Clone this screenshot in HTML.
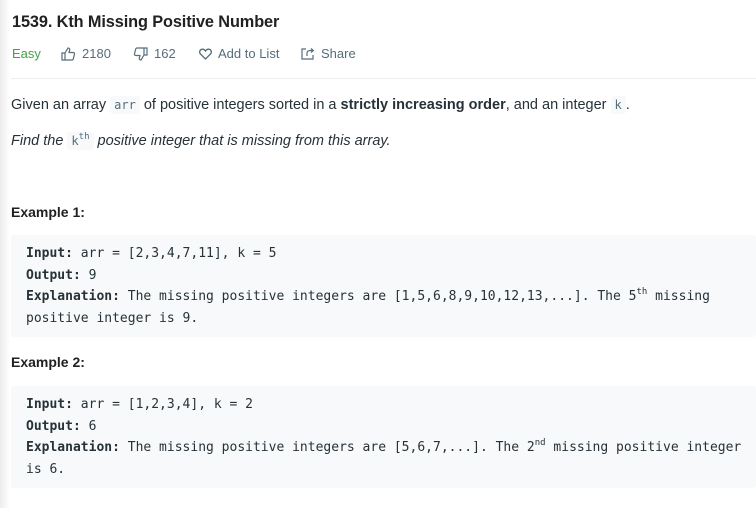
<!DOCTYPE html>
<html><head><meta charset="utf-8"><style>
*{margin:0;padding:0;box-sizing:border-box}
body{width:756px;height:508px;overflow:hidden;background:#fff;font-family:"Liberation Sans",sans-serif;color:#263238;position:relative}
.shade{position:absolute;left:0;top:0;bottom:0;width:10px;background:linear-gradient(to right,#ececec,#fff)}
h1{position:absolute;left:12px;top:13px;font-size:16.3px;font-weight:bold;color:#212121;letter-spacing:-0.1px}
.meta{position:absolute;top:46px;font-size:13px;color:#546e7a;display:flex;align-items:center}
.meta svg{margin-right:6px}
hr{position:absolute;left:11px;right:0;top:78px;border:0;border-top:1px solid #eceff1}
p{position:absolute;left:11px;font-size:14.5px;color:#263238;white-space:nowrap}
code{font-family:"DejaVu Sans Mono",monospace;font-size:12px;background:#f7f9fa;color:#546e7a;padding:2px 4px;border-radius:3px}
.pre{position:absolute;left:11px;right:0;background:#f7f9fa;border-radius:3px;font-family:"DejaVu Sans Mono",monospace;font-size:13px;line-height:21.5px;color:#263238;padding:8px 15px;white-space:pre}
.pre b{font-weight:bold}
sup{font-size:9px;line-height:0;vertical-align:6px}
h3{position:absolute;left:11px;font-size:14px;font-weight:bold;color:#212121}
</style></head><body>
<div class="shade"></div>
<h1>1539. Kth Missing Positive Number</h1>
<div class="meta" style="left:12px;color:#43a047">Easy</div>
<div class="meta" style="left:61px"><svg width="15" height="14" viewBox="0 0 15 14" fill="none" stroke="#546e7a" stroke-width="1.2"><path d="M1 6h3v7H1zM4 6l3-5c1.2 0 2 .8 1.7 2L8 5.5h4.2c.9 0 1.5.8 1.3 1.6l-1.2 4.8c-.2.7-.8 1.1-1.5 1.1H4"/></svg>2180</div>
<div class="meta" style="left:133px"><svg width="15" height="14" viewBox="0 0 15 14" fill="none" stroke="#546e7a" stroke-width="1.2"><path d="M14 8h-3V1h3zM11 8l-3 5c-1.2 0-2-.8-1.7-2L7 8.5H2.8c-.9 0-1.5-.8-1.3-1.6l1.2-4.8C2.9 1.4 3.5 1 4.2 1H11"/></svg>162</div>
<div class="meta" style="left:199px"><svg width="13" height="12" viewBox="0 0 13 12" fill="none" stroke="#546e7a" stroke-width="1.3"><path d="M6.5 11L1.5 6C0 4.5.5 1.5 3.2 1.2c1.5-.2 2.6.8 3.3 1.8.7-1 1.8-2 3.3-1.8C12.5 1.5 13 4.5 11.5 6z"/></svg>Add to List</div>
<div class="meta" style="left:301px"><svg width="14" height="13" viewBox="0 0 14 13" fill="none" stroke="#546e7a" stroke-width="1.2"><path d="M5 2H1v10h11V8M6 9V6c0-1.5 1-2.5 3-2.5h3M10 1.5l2.3 2-2.3 2"/></svg>Share</div>
<hr>
<p style="top:97px">Given an array <code>arr</code> of positive integers sorted in a <b>strictly increasing order</b>, and an integer <code>k</code>.</p>
<p style="top:133px;font-style:italic">Find the <code style="font-style:normal">k<sup>th</sup></code> positive integer that is missing from this array.</p>
<h3 style="top:204px">Example 1:</h3>
<div class="pre" style="top:235px;height:102px"><b>Input:</b> arr = [2,3,4,7,11], k = 5
<b>Output:</b> 9
<b>Explanation:</b> The missing positive integers are [1,5,6,8,9,10,12,13,...]. The 5<sup>th</sup> missing
positive integer is 9.</div>
<h3 style="top:354px">Example 2:</h3>
<div class="pre" style="top:386px;height:102px"><b>Input:</b> arr = [1,2,3,4], k = 2
<b>Output:</b> 6
<b>Explanation:</b> The missing positive integers are [5,6,7,...]. The 2<sup>nd</sup> missing positive integer
is 6.</div>
</body></html>
